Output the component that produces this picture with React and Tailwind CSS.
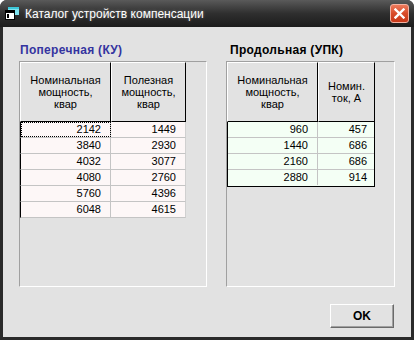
import React from "react";

const font = { fontFamily: '"Liberation Sans", Arial, sans-serif' };

const leftRows = [
  [2142, 1449],
  [3840, 2930],
  [4032, 3077],
  [4080, 2760],
  [5760, 4396],
  [6048, 4615],
];

const rightRows = [
  [960, 457],
  [1440, 686],
  [2160, 686],
  [2880, 914],
];

function HeaderCell({ width, lines }) {
  return (
    <div
      className="h-[60px] flex flex-col items-center justify-center border-t border-l border-t-white border-l-white border-r border-b border-r-black border-b-black bg-[#e2e2e2] text-[11px] leading-[12px] text-black text-center"
      style={{ width }}
    >
      {lines.map((l) => (
        <span key={l}>{l}</span>
      ))}
    </div>
  );
}

function WindowIcon() {
  return (
    <svg width="14" height="13" viewBox="0 0 14 13" className="shrink-0">
      <rect x="3" y="0" width="11" height="8" fill="#7fe3ef" />
      <rect x="3" y="0" width="11" height="2" fill="#3cc6d8" />
      <rect x="0.5" y="3.5" width="9" height="9" fill="#ffffff" stroke="#000" />
      <rect x="1" y="4" width="8" height="2" fill="#000" />
      <rect x="2" y="7" width="2" height="4" fill="#000" />
    </svg>
  );
}

export default function App() {
  return (
    <div className="w-[414px] h-[340px] bg-[#2a2a2a] rounded-t-[7px] flex flex-col overflow-hidden" style={font}>
      {/* title bar */}
      <div className="h-[27px] shrink-0 flex items-center pl-[5px] pr-[5px] bg-gradient-to-b from-[#5a5a5a] via-[#2f2f2f] to-[#1c1c1c]">
        <WindowIcon />
        <span className="ml-[6px] text-white text-[12px] [text-shadow:0_0_3px_rgba(255,255,255,0.35)]">
          Каталог устройств компенсации
        </span>
        <div className="ml-auto w-[19px] h-[19px] rounded-[3px] border border-[#f3b2a2] bg-gradient-to-b from-[#ee7a5c] via-[#d84b29] to-[#c8391a] flex items-center justify-center">
          <svg width="11" height="11" viewBox="0 0 11 11">
            <path d="M1.5 1.5 L9.5 9.5 M9.5 1.5 L1.5 9.5" stroke="#fff" strokeWidth="2.4" strokeLinecap="square" />
          </svg>
        </div>
      </div>

      {/* body */}
      <div className="flex-1 mx-[3px] mb-[3px] bg-[#e2e2e2] flex flex-col pt-[16px] px-[16px] pb-[9px]">
        <div className="flex gap-[19px]">
          {/* left: transverse */}
          <div className="flex flex-col">
            <div className="h-[14px] leading-[14px] mb-[4px] pl-[1px] text-[12px] tracking-[0.3px] font-bold text-[#3434a0]">
              Поперечная (КУ)
            </div>
            <div className="w-[188px] h-[226px] border-t border-l border-[#a0a0a0] border-b border-r border-b-white border-r-white">
              <div className="flex">
                <HeaderCell width={91} lines={["Номинальная", "мощность,", "квар"]} />
                <HeaderCell width={75} lines={["Полезная", "мощность,", "квар"]} />
              </div>
              {leftRows.map(([a, b], i) => (
                <div key={a} className="flex w-[166px] h-[16px] bg-[#fdf7f7] border-b border-[#c4c4c4] border-l border-l-black border-r border-r-[#d0d0d0] text-[11px] text-black">
                  <div
                    className={
                      "w-[90px] h-[15px] leading-[15px] text-right pr-[9px] border-r border-[#c4c4c4]" +
                      (i === 0 ? " outline outline-1 outline-dotted outline-black -outline-offset-1" : "")
                    }
                  >
                    {a}
                  </div>
                  <div className="flex-1 h-[15px] leading-[15px] text-right pr-[9px]">{b}</div>
                </div>
              ))}
            </div>
          </div>

          {/* right: longitudinal */}
          <div className="flex flex-col">
            <div className="h-[14px] leading-[14px] mb-[4px] pl-[4px] text-[12px] tracking-[0.3px] font-bold text-black">
              Продольная (УПК)
            </div>
            <div className="w-[169px] h-[226px] border-t border-l border-[#a0a0a0] border-b border-r border-b-white border-r-white">
              <div className="flex">
                <HeaderCell width={91} lines={["Номинальная", "мощность,", "квар"]} />
                <HeaderCell width={57} lines={["Номин.", "ток, А"]} />
              </div>
              <div className="w-[148px] border-l border-r border-b border-black">
                {rightRows.map(([a, b], i) => (
                  <div
                    key={a}
                    className={
                      "flex h-[16px] bg-[#f4fff5] text-[11px] text-black" +
                      (i < rightRows.length - 1 ? " border-b border-[#c4c4c4]" : "")
                    }
                  >
                    <div className="w-[90px] h-[15px] leading-[15px] text-right pr-[9px] border-r border-[#c4c4c4]">{a}</div>
                    <div className="flex-1 h-[15px] leading-[15px] text-right pr-[7px]">{b}</div>
                  </div>
                ))}
              </div>
            </div>
          </div>
        </div>

        <div className="mt-auto flex justify-end">
          <button className="w-[64px] h-[24px] mr-[1px] bg-[#e2e2e2] border border-t-white border-l-white border-r-[#6a6a6a] border-b-[#6a6a6a] shadow-[inset_-1px_-1px_0_#a0a0a0] text-[12px] font-bold text-black">
            OK
          </button>
        </div>
      </div>
    </div>
  );
}
